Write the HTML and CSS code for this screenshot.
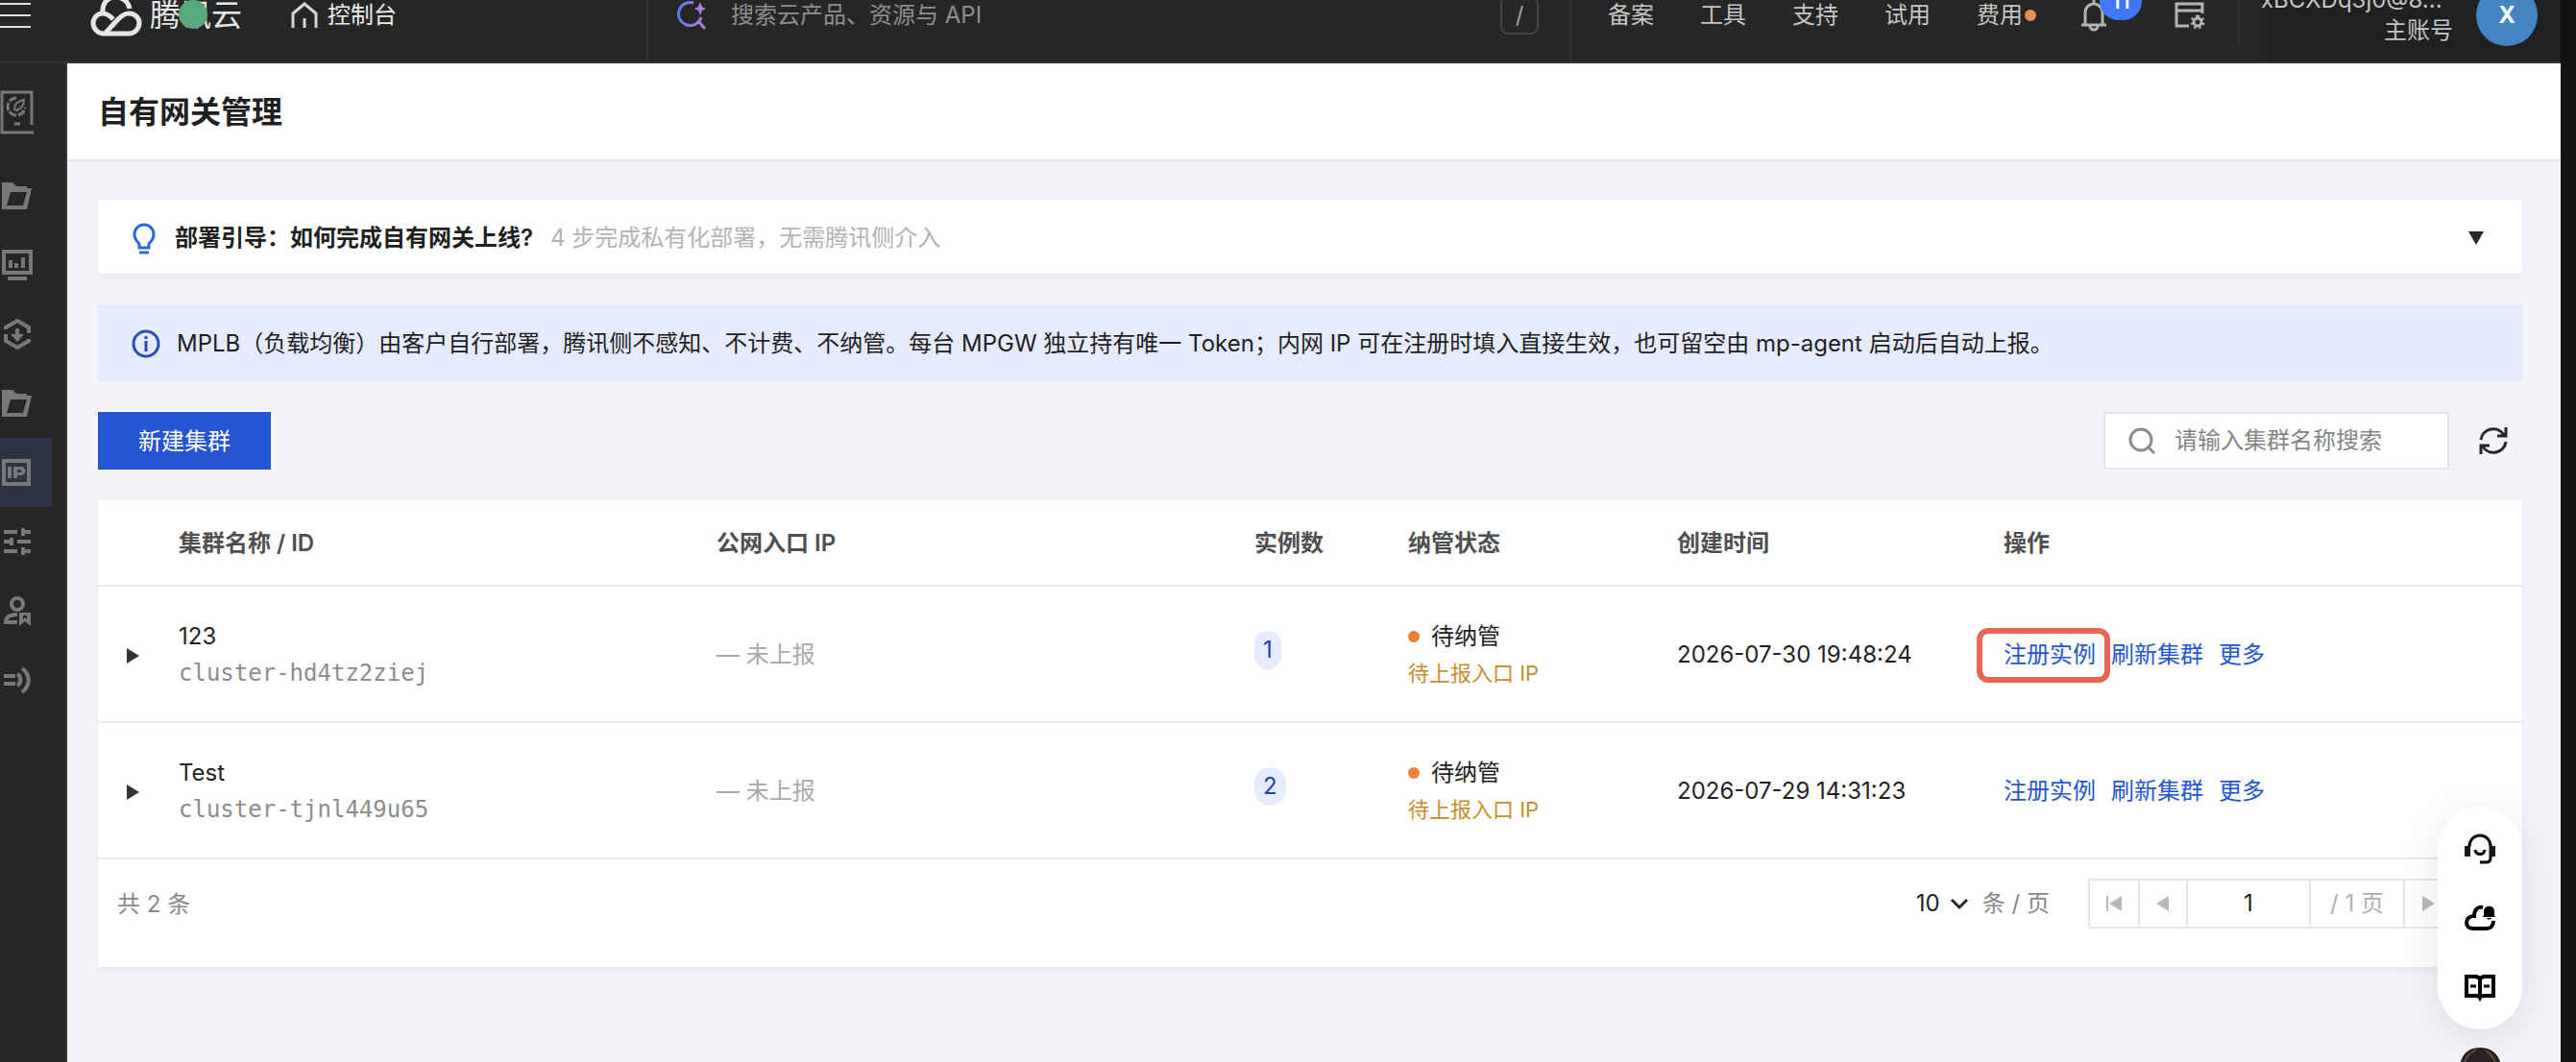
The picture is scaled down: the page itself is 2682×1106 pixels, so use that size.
FILE: index.html
```html
<!DOCTYPE html>
<html lang="zh-CN">
<head>
    <meta charset="utf-8">
    <title>自有网关管理</title>
    <link rel="stylesheet" href="styles.css">
</head>
<body>
    <header class="topbar">
        <button class="menu-btn" aria-label="菜单"><span></span><span></span><span></span></button>
        <a class="logo" href="#">
            <svg width="54" height="44" viewBox="0 0 54 44" fill="none" stroke="#e6e6e6" stroke-width="5">
                <path d="M13 20C12 9 18 3 26 3c8 0 14 5 15 12"/>
                <path d="M24 26c-3-3-6-6-11-6-6 0-10 5-10 10 0 6 5 11 11 11h26c6 0 11-5 11-11s-5-10-11-10c-5 0-8 3-11 6L16 40"/>
            </svg>
            <span>腾讯云</span>
            <i class="rec-dot"></i>
        </a>
        <a class="console" href="#">
            <svg width="28" height="28" viewBox="0 0 28 28" fill="none" stroke="#d6d6d6" stroke-width="3"><path d="M2 27V12L14 2l12 10v15M14 17v10"/></svg>
            控制台
        </a>
        <label class="top-search">
            <svg width="32" height="32" viewBox="0 0 32 32" fill="none">
                <defs><linearGradient id="g" x1="0" x2="1"><stop offset="0" stop-color="#5b7cf0"/><stop offset="1" stop-color="#b07ad0"/></linearGradient></defs>
                <path d="M17 3a12 12 0 1 0 8 15M23 23l6 7" stroke="url(#g)" stroke-width="3"/>
                <path d="M24 2l2 5 4 2-4 2-2 5-2-5-4-2 4-2z" fill="#a583dc"/>
            </svg>
            <input type="text" placeholder="搜索云产品、资源与 API">
            <kbd>/</kbd>
        </label>
        <nav class="top-nav">
            <a href="#">备案</a>
            <a href="#">工具</a>
            <a href="#">支持</a>
            <a href="#">试用</a>
            <a href="#" class="has-dot">费用</a>
        </nav>
        <button class="bell" aria-label="消息">
            <svg width="28" height="34" viewBox="0 0 28 34" fill="none" stroke="#b4b4b4" stroke-width="3"><path d="M14 1v4M1 27h26M5 26V14a9 9 0 0 1 18 0v12M10 28a4 4 0 0 0 8 0"/></svg>
            <span class="bell-num">11</span>
        </button>
        <button class="ticket" aria-label="自定义">
            <svg width="32" height="32" viewBox="0 0 32 32" fill="none" stroke="#b4b4b4" stroke-width="3"><path d="M15 27H2V4h27v10M2 11h27"/><circle cx="24" cy="23" r="4"/><path stroke-dasharray="2 3" stroke-width="3" d="M24 17a6 6 0 1 1 0 12a6 6 0 1 1 0-12"/></svg>
        </button>
        <div class="account">
            <div class="account-text">
                <span>xBCXDq3j0@8...</span>
                <span>主账号</span>
            </div>
            <div class="avatar">X</div>
        </div>
    </header>

    <div class="page">
        <nav class="sidebar">
            <a href="#" class="side-item side-top" aria-label="产品">
                <svg width="36" height="46" viewBox="0 0 36 46" fill="none" stroke="#787878" stroke-width="3"><path d="M33 36V2H2v42h33"/><path d="M17 8a9 9 0 1 0 9 10" stroke-dasharray="8 2"/><path d="M15 20c0-6 4-9 10-10 0 5-3 9-8 11zM10 22c2 3 4 4 7 4" stroke-width="2"/><path d="M15 35h6"/></svg>
            </a>
            <a href="#" class="side-item" aria-label="目录">
                <svg width="34" height="32" viewBox="0 0 34 32" fill="#787878"><path fill-rule="evenodd" d="M2 2h11l4 4h11v2h5l-5 22H2zM11 12L7 26h17l4-14z"/></svg>
            </a>
            <a href="#" class="side-item" aria-label="监控">
                <svg width="34" height="32" viewBox="0 0 34 32" fill="#787878"><path fill-rule="evenodd" d="M2 0h32v26H2zM6 4v18h24V4z"/><path d="M9 11h4v8H9zM15 14h4v5h-4zM22 8h4v11h-4zM8 28h20v4H8z"/></svg>
            </a>
            <a href="#" class="side-item" aria-label="下载">
                <svg width="34" height="32" viewBox="0 0 34 32" fill="none" stroke="#787878" stroke-width="4"><path d="M6 11v-2l12-7 12 7v6M6 16v7l12 7 12-7v-2"/><path d="M18 10v8"/><path d="M11 16h14l-7 8z" fill="#787878" stroke="none"/></svg>
            </a>
            <a href="#" class="side-item" aria-label="资源目录">
                <svg width="34" height="32" viewBox="0 0 34 32" fill="#787878"><path fill-rule="evenodd" d="M2 2h11l4 4h11v2h5l-5 22H2zM11 12L7 26h17l4-14z"/></svg>
            </a>
            <a href="#" class="side-item active" aria-label="IP 管理">
                <svg width="34" height="32" viewBox="0 0 34 32" fill="#787878"><path fill-rule="evenodd" d="M2 2h30v28H2zM6 6v20h22V6z"/><path fill-rule="evenodd" d="M8 10h4v12H8zM14 10h8a4 4 0 0 1 0 9h-4v3h-4zM18 13v3h4v-3z"/></svg>
            </a>
            <a href="#" class="side-item" aria-label="配置">
                <svg width="34" height="32" viewBox="0 0 34 32" fill="#787878"><path d="M4 4h14v4H4zM22 2h4v2h6v4h-6v2h-4zM4 14h6v-2h4v8h-4v-2H4zM18 14h14v4H18zM4 24h14v4H4zM22 22h4v2h6v4h-6v2h-4z"/></svg>
            </a>
            <a href="#" class="side-item" aria-label="用户">
                <svg width="34" height="32" viewBox="0 0 34 32" fill="none" stroke="#787878" stroke-width="4"><circle cx="18" cy="9" r="6"/><path d="M18 20c-7 0-12 2-12 8h12"/><path d="M20 18h12v14l-6-5-6 5zM24 21v4l2-2 2 2v-4z" fill="#787878" fill-rule="evenodd" stroke="none"/></svg>
            </a>
            <a href="#" class="side-item" aria-label="连接">
                <svg width="34" height="32" viewBox="0 0 34 32" fill="none" stroke="#787878" stroke-width="4"><path d="M4 12h12M4 20h12"/><path d="M18 10a7 7 0 0 1 0 12M23 4c9 7 9 17 0 25"/></svg>
            </a>
        </nav>

        <main class="main">
            <div class="page-head"><h1>自有网关管理</h1></div>
            <div class="content">
                <button class="guide">
                    <svg width="28" height="34" viewBox="0 0 28 34" fill="none" stroke="#2f66dc" stroke-width="2"><path d="M9 27v-4c-3-3-5-6-5-10a10 10 0 0 1 20 0c0 4-2 7-5 10v4zM9 32h10" stroke-width="3"/></svg>
                    <strong>部署引导：如何完成自有网关上线?</strong>
                    <span>4 步完成私有化部署，无需腾讯侧介入</span>
                    <i class="arrow-down"></i>
                </button>

                <div class="notice">
                    <svg width="32" height="32" viewBox="0 0 32 32" fill="none" stroke="#2a4bbd" stroke-width="3"><circle cx="16" cy="16" r="13"/><path d="M16 8v3M16 13v11"/></svg>
                    <p>MPLB（负载均衡）由客户自行部署，腾讯侧不感知、不计费、不纳管。每台 MPGW 独立持有唯一 Token；内网 IP 可在注册时填入直接生效，也可留空由 mp-agent 启动后自动上报。</p>
                </div>

                <div class="toolbar">
                    <button class="btn-primary">新建集群</button>
                    <label class="search">
                        <svg width="32" height="32" viewBox="0 0 32 32" fill="none" stroke="#8c8c8c" stroke-width="3"><circle cx="15" cy="15" r="11"/><path d="M23 23l6 6"/></svg>
                        <input type="text" placeholder="请输入集群名称搜索" aria-label="集群名称">
                    </label>
                    <button class="refresh" aria-label="刷新">
                        <svg width="32" height="32" viewBox="0 0 32 32" fill="none" stroke="#262626" stroke-width="3"><path d="M3 15a13 13 0 0 1 24-5M29 2v9h-9M29 17a13 13 0 0 1-24 5M3 30v-9h9"/></svg>
                    </button>
                </div>

                <section class="card">
                    <table>
                        <colgroup>
                            <col class="c-expand"><col><col><col class="c-count"><col class="c-status"><col class="c-time"><col>
                        </colgroup>
                        <thead>
                            <tr>
                                <th></th>
                                <th>集群名称 / ID</th>
                                <th>公网入口 IP</th>
                                <th>实例数</th>
                                <th>纳管状态</th>
                                <th>创建时间</th>
                                <th>操作</th>
                            </tr>
                        </thead>
                        <tbody>
                            <tr>
                                <td class="expand"><button aria-label="展开"></button></td>
                                <td><div>123</div><div class="cid">cluster-hd4tz2ziej</div></td>
                                <td class="muted">— 未上报</td>
                                <td class="count"><span>1</span></td>
                                <td><div class="status">待纳管</div><div class="warn">待上报入口 IP</div></td>
                                <td>2026-07-30 19:48:24</td>
                                <td><div class="ops"><a href="#" class="marked">注册实例</a><a href="#">刷新集群</a><a href="#">更多</a></div></td>
                            </tr>
                            <tr>
                                <td class="expand"><button aria-label="展开"></button></td>
                                <td><div>Test</div><div class="cid">cluster-tjnl449u65</div></td>
                                <td class="muted">— 未上报</td>
                                <td class="count"><span>2</span></td>
                                <td><div class="status">待纳管</div><div class="warn">待上报入口 IP</div></td>
                                <td>2026-07-29 14:31:23</td>
                                <td><div class="ops"><a href="#">注册实例</a><a href="#">刷新集群</a><a href="#">更多</a></div></td>
                            </tr>
                        </tbody>
                    </table>
                    <div class="pager">
                        <span class="total">共 2 条</span>
                        <label class="page-size">
                            <select><option>10</option></select>
                            <svg width="20" height="20" viewBox="0 0 20 20" fill="none" stroke="#262626" stroke-width="3"><path d="M2 6l8 8 8-8"/></svg>
                            <span>条 / 页</span>
                        </label>
                        <div class="pages">
                            <button aria-label="首页"><svg width="16" height="16" viewBox="0 0 16 16" fill="#b8b8b8"><path d="M0 0h2v16H0zM16 0v16L3 8z"/></svg></button>
                            <button aria-label="上一页"><svg width="16" height="16" viewBox="0 0 16 16" fill="#b8b8b8"><path d="M14 0v16L1 8z"/></svg></button>
                            <input type="text" value="1" aria-label="页码">
                            <span>/ 1 页</span>
                            <button aria-label="下一页"><svg width="16" height="16" viewBox="0 0 16 16" fill="#b8b8b8"><path d="M2 0v16l13-8z"/></svg></button>
                            <button aria-label="末页"><svg width="16" height="16" viewBox="0 0 16 16" fill="#b8b8b8"><path d="M0 0v16l13-8zM14 0h2v16h-2z"/></svg></button>
                        </div>
                    </div>
                </section>
            </div>
        </main>
    </div>

    <aside class="float-bar">
        <button aria-label="客服">
            <svg width="32" height="32" viewBox="0 0 32 32" fill="none" stroke="#000" stroke-width="3"><path d="M5 14v-1a11 11 0 0 1 22 0v12c0 3-1 5-4 5h-7"/><path d="M11 17c1 6 9 6 10 0"/><path d="M0 13h6v11H0zM26 13h6v11h-6z" fill="#1a1a1a" stroke="none"/></svg>
        </button>
        <button aria-label="云消息">
            <svg width="32" height="32" viewBox="0 0 32 32" fill="none" stroke="#000" stroke-width="4"><path d="M19 5c-6-1-9 3-9 9-5 0-8 3-8 7s3 6 7 6h14c4 0 7-3 7-8"/><path d="M20 14V9c0-7 11-7 11 0v5h2v1H19v-1zM23 16h5c-1 2-4 2-5 0z" fill="#000" stroke="none"/></svg>
        </button>
        <button aria-label="文档">
            <svg width="32" height="32" viewBox="0 0 32 32" fill="none" stroke="#000" stroke-width="4"><path d="M16 8c-1-2-3-3-5-3H2v20h10c2 0 3 0 4 2 1-2 2-2 4-2h10V5h-9c-2 0-4 1-5 3zM16 7v21"/><path d="M6 15h6M20 15h6" stroke-width="3"/></svg>
        </button>
    </aside>
    <div class="helper">
        <svg width="88" height="44" viewBox="0 0 88 44"><circle cx="44" cy="54" r="44" fill="#fff"/><path d="M21 44C20 14 26 0 44 0s26 14 23 44z" fill="#2a2022"/><path d="M40 2c-9 5-12 10-13 20M50 3c5 3 9 8 11 16" stroke="#5c4a48" fill="none" stroke-width="2"/></svg>
    </div>
</body>
</html>
```
FILE: styles.css
```css
* {
    box-sizing: border-box;
}
body {
    margin: 0;
    height: 100vh;
    overflow: hidden;
    display: flex;
    flex-direction: column;
    background: #111213;
    border-right: 16px solid #111213;
    font-family: Inter, "Noto Sans CJK SC", sans-serif;
    font-size: 24px;
    line-height: 38px;
    color: #1f1f1f;
}
a {
    text-decoration: none;
    color: inherit;
}
button, input, select {
    font: inherit;
    color: inherit;
    border: none;
    background: none;
    padding: 0;
    margin: 0;
}
svg {
    display: block;
    flex: none;
}

/* top bar, scrolled partly out of view */
.topbar {
    height: 100px;
    margin-top: -34px;
    padding-top: 2px;
    flex: none;
    display: flex;
    align-items: center;
    background: linear-gradient(90deg, #262626 88%, #202020 89%);
    border-bottom: 2px solid #333;
    color: #c4c4c4;
}
.menu-btn {
    width: 32px;
    display: flex;
    flex-direction: column;
    gap: 10px;
}
.menu-btn span {
    height: 2px;
    background: #e0e0e0;
}
.logo {
    position: relative;
    display: flex;
    align-items: center;
    gap: 8px;
    margin-left: 62px;
    font-size: 32px;
    color: #e6e6e6;
}
.rec-dot {
    position: absolute;
    left: 92px;
    top: 6px;
    width: 30px;
    height: 30px;
    border-radius: 50%;
    background: #5aa87d;
}
.console {
    display: flex;
    align-items: center;
    gap: 10px;
    margin-left: 51px;
    color: #ececec;
}
.top-search {
    flex: 1;
    align-self: stretch;
    display: flex;
    align-items: center;
    margin-left: 260px;
    padding: 0 32px 0 30px;
    border-left: 2px solid #333;
    border-right: 2px solid #333;
}
.top-search input {
    flex: 1;
    margin-left: 24px;
}
.top-search input::placeholder {
    color: #8e8e8e;
}
.top-search kbd {
    width: 40px;
    height: 40px;
    border: 2px solid #444;
    border-radius: 8px;
    text-align: center;
    line-height: 36px;
    font-family: inherit;
    color: #a0a0a0;
}
.top-nav {
    display: flex;
    gap: 48px;
    margin-left: 38px;
}
.has-dot {
    display: flex;
    align-items: center;
    gap: 2px;
}
.has-dot::after {
    content: "";
    width: 12px;
    height: 12px;
    border-radius: 50%;
    background: #e08e52;
}
.bell {
    position: relative;
    margin-left: 46px;
}
.bell-num {
    position: absolute;
    left: 20px;
    top: -18px;
    width: 44px;
    height: 40px;
    border-radius: 20px;
    background: #4077f8;
    color: #fff;
    font-size: 24px;
    font-weight: 500;
    line-height: 40px;
}
.ticket {
    margin-left: 70px;
}
.account {
    display: flex;
    align-items: center;
    gap: 24px;
    margin-left: 34px;
    padding: 0 24px 0 22px;
    border-left: 2px solid #333;
}
.account-text {
    width: 200px;
    display: flex;
    flex-direction: column;
    line-height: 32px;
}
.account-text span:last-child {
    text-align: right;
}
.avatar {
    width: 64px;
    height: 64px;
    border-radius: 50%;
    background: #4583c4;
    color: #fff;
    font-weight: bold;
    line-height: 64px;
    text-align: center;
}

.page {
    flex: 1;
    display: flex;
    min-height: 0;
}
.sidebar {
    width: 70px;
    flex: none;
    background: #262626;
    border-right: 2px solid #333;
}
.side-item {
    width: 54px;
    height: 72px;
    display: flex;
    align-items: center;
}
.side-top {
    height: 102px;
}
.side-item.active {
    background: #2d3344;
}

.main {
    flex: 1;
    min-width: 0;
    background: #f2f4f8;
}
.page-head {
    height: 102px;
    padding: 2px 32px 0;
    display: flex;
    align-items: center;
    background: #fff;
    border-bottom: 2px solid #e4e7ed;
}
.page-head h1 {
    margin: 0;
    font-size: 32px;
    font-weight: 600;
}
.content {
    padding: 40px 40px 40px 32px;
    display: flex;
    flex-direction: column;
    gap: 32px;
}
.guide {
    height: 77px;
    display: flex;
    align-items: center;
    padding: 2px 40px 0 34px;
    background: #fff;
    box-shadow: 0 4px 6px rgba(54, 58, 80, 0.06);
    text-align: left;
}
.guide strong {
    margin-left: 18px;
    font-weight: 600;
}
.guide span {
    flex: 1;
    margin-left: 18px;
    color: #b3b3b3;
}
.arrow-down {
    border: 8px solid transparent;
    border-top: 14px solid #262626;
    border-bottom: 0;
}
.notice {
    min-height: 80px;
    display: flex;
    align-items: center;
    gap: 16px;
    padding: 2px 34px 0;
    background: #e5ebfd;
}
.notice p {
    margin: 0;
}
.toolbar {
    display: flex;
    align-items: center;
}
.btn-primary {
    width: 180px;
    height: 60px;
    padding-top: 2px;
    background: #2555d2;
    color: #fff;
}
.search {
    width: 360px;
    height: 60px;
    margin-left: auto;
    display: flex;
    align-items: center;
    gap: 18px;
    padding: 0 22px;
    background: #fff;
    border: 2px solid #e2e6ec;
}
.search input {
    flex: 1;
    min-width: 0;
}
.search input::placeholder {
    color: #858585;
}
.refresh {
    margin-left: 16px;
    padding: 0 14px;
}

.card {
    background: #fff;
    box-shadow: 0 4px 6px rgba(54, 58, 80, 0.06);
}
table {
    width: 100%;
    table-layout: fixed;
    border-collapse: separate;
    border-spacing: 0;
}
.c-expand {
    width: 64px;
}
.c-count {
    width: 160px;
}
.c-status {
    width: 280px;
}
.c-time {
    width: 340px;
}
th, td {
    padding: 2px 20px 0;
    text-align: left;
    vertical-align: middle;
    border-bottom: 2px solid #e6eaef;
}
th {
    height: 90px;
    font-weight: 600;
    color: #4f4f4f;
}
td {
    height: 142px;
}
.expand {
    padding: 4px 0 0 30px;
}
.expand button {
    display: block;
    border: 8px solid transparent;
    border-left: 13px solid #333;
    border-right: 0;
}
.cid {
    font-family: "DejaVu Sans Mono", monospace;
    color: #8c8c8c;
}
.muted {
    color: #a8a8a8;
}
.count {
    padding-bottom: 10px;
}
.count span {
    display: inline-block;
    padding: 0 9px;
    line-height: 40px;
    border-radius: 20px;
    background: #e5ebfd;
    color: #1d40b8;
}
.status {
    display: flex;
    align-items: center;
    gap: 12px;
}
.status::before {
    content: "";
    width: 12px;
    height: 12px;
    border-radius: 50%;
    background: #ec8238;
}
.warn {
    font-size: 22px;
    color: #c58e2d;
}
.ops {
    display: flex;
    gap: 16px;
    color: #2555d2;
}
.marked {
    position: relative;
}
.marked::after {
    content: "";
    position: absolute;
    top: -9px;
    right: -15px;
    bottom: -10px;
    left: -28px;
    border: 6px solid #eb6555;
    border-radius: 12px;
}
.pager {
    display: flex;
    align-items: center;
    padding: 20px 22px 40px 20px;
    color: #888;
}
.total {
    padding-top: 2px;
}
.page-size {
    display: flex;
    align-items: center;
    margin-left: auto;
}
.page-size select {
    appearance: none;
    color: #1f1f1f;
    margin-right: 10px;
}
.page-size span {
    margin: 0 40px 0 14px;
}
.pages {
    display: flex;
    height: 52px;
    border: 2px solid #e2e6ec;
}
.pages > * {
    display: flex;
    align-items: center;
    justify-content: center;
}
.pages > * + * {
    border-left: 2px solid #e2e6ec;
}
.pages button {
    width: 50px;
}
.pages input {
    width: 128px;
    text-align: center;
    color: #1f1f1f;
}
.pages span {
    width: 98px;
    color: #b0b0b0;
}

/* floating tools over the page */
.float-bar {
    position: fixed;
    right: 56px;
    bottom: 34px;
    width: 88px;
    padding: 8px 0;
    border-radius: 44px;
    background: #fff;
    box-shadow: 0 8px 40px rgba(54, 58, 80, 0.12);
}
.float-bar button {
    width: 88px;
    height: 72px;
    display: flex;
    align-items: center;
    justify-content: center;
}
.helper {
    position: fixed;
    right: 56px;
    bottom: -29px;
}
```
